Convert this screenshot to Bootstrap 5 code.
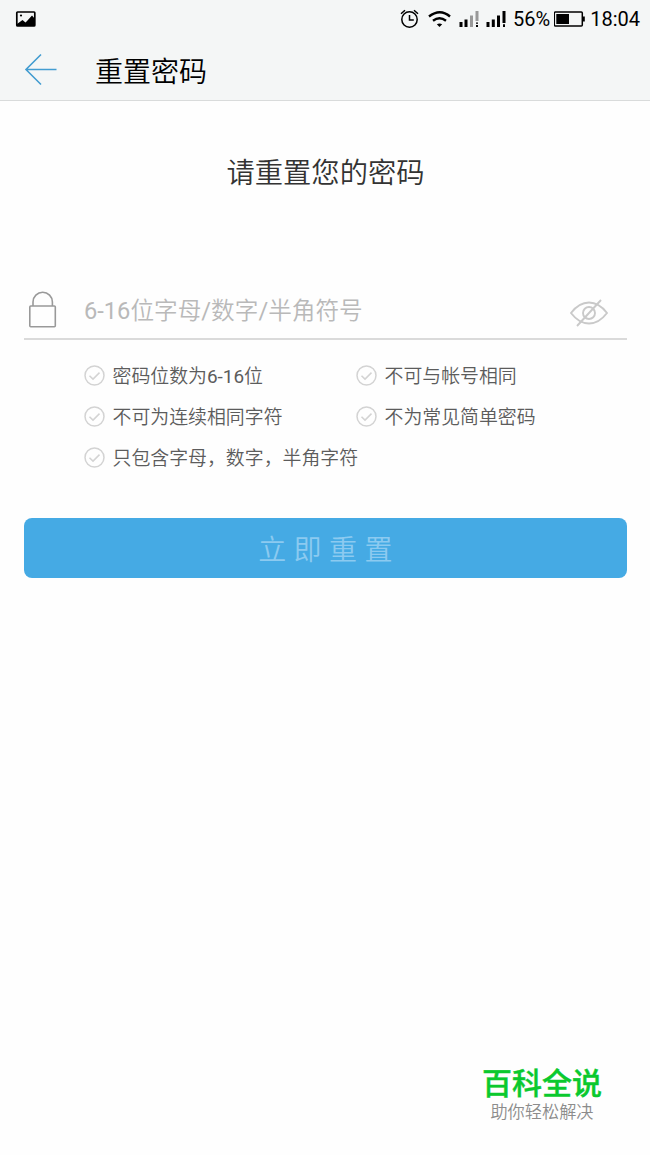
<!DOCTYPE html>
<html lang="zh-CN">
<head>
<meta charset="utf-8">
<meta name="viewport" content="width=device-width, initial-scale=1">
<title>重置密码</title>
<link href="https://cdn.jsdelivr.net/npm/bootstrap@5.3.0/dist/css/bootstrap.min.css" rel="stylesheet">
<style>
  body { font-family: Roboto, "Noto Sans CJK SC", sans-serif; color: #000; background: #fefefe; }
  svg { display: block; flex: none; }
  .screen { width: 650px; height: 1155px; }
  .top-area { height: 101px; background: #f4f6f6; border-bottom: 1px solid #d9dbdb; }
  .status-bar { height: 38px; padding: 0 10px 0 15px; font-size: 20px; line-height: 38px; }
  .app-bar { height: 62px; padding: 2px 0 0 24px; }
  .app-title { font-size: 28px; line-height: 40px; margin: 0 0 0 38px; padding-top: 5px; font-weight: 350; }
  .content { padding: 0 23px 0 24px; }
  .heading { font-size: 28.3px; line-height: 40px; margin: 53px 0 0; font-weight: 350; color: #333; }
  .field { height: 60px; margin-top: 86px; border-bottom: 2px solid #dadada; }
  .pwd { font-size: 23.65px; font-weight: 350; padding-top: 4px; margin-left: 26px; line-height: 36px; color: #b9b9b9; }
  .latin { font-weight: 400; }
  .eye { margin: 7px 19.500px 0 0; }
  .rules { padding: 15px 0 0 60px; font-size: 18.9px; font-weight: 350; line-height: 41px; color: #5c5c5c; }
  .rule { gap: 7.500px; height: 41px; white-space: nowrap; }
  .rule > span { padding-top: 1.500px; }
  .rule-first { width: 272px; }
  .reset { height: 60px; margin-top: 40px; border-radius: 8px; font-size: 28px; letter-spacing: 7.4px; padding: 5px 0 0 7px; font-weight: 350;
    --bs-btn-color: #8ccaf0; --bs-btn-bg: #45aae4; --bs-btn-hover-color: #8ccaf0; --bs-btn-hover-bg: #3d9fd8; }
  .brand { width: 120px; margin: 0 48px 31px 0; }
  .brand-name { font-size: 30px; line-height: 34px; padding-top: 3px; margin-bottom: -1px; font-weight: 500; color: #0ac92e; -webkit-text-stroke: .4px #0ac92e; }
  .brand-line { font-size: 17.2px; line-height: 24px; font-weight: 350; color: #8c8c8c; }
</style>
</head>
<body>
<div class="screen d-flex flex-column overflow-hidden">
  <header class="top-area">
    <div class="status-bar d-flex align-items-center">
      <svg width="21" height="18" viewBox="0 0 21 18"><rect x="1.800" y="2" width="18" height="14" rx=".8" fill="none" stroke="#000" stroke-width="1.700"/><path d="M2 15v-1l5.500-4 3 2.500 1.500-1.500 5-5.500 3 3.500V16H2z"/><circle cx="6" cy="5.500" r="1.100"/></svg>
      <div class="d-flex align-items-center ms-auto">
        <svg width="113" height="22" viewBox="0 0 113 22">
          <g fill="none" stroke="#000" stroke-width="1.500"><circle cx="9.500" cy="11.500" r="7.700"/><path d="M9.500 7v5h4.300M1 5.800l4-3.500M18 5.800l-4-3.500"/></g>
          <g fill="none" stroke="#000" stroke-width="2.400"><path d="M29 8.500q11-8.500 21 0M33 12.800q6.500-5 13 0"/></g><path d="M36.800 16.300q2.700-1.500 5.400 0l-2.700 2.800z"/>
          <path d="M59.500 14h3v5h-3zM64.500 11.500h3V19h-3z"/><path fill="#999" d="M70 7.500h3V19h-3zM75.500 3h3v10h-3z"/><path d="M76 14.500h2v1.300h-2zM76 17h2v2h-2z"/>
          <path d="M86.500 14h3v5h-3zM91.800 11.500h3V19h-3zM97 7.500h3V19h-3zM102.500 3h3v12h-3zM103 16.200h2V19h-2z"/>
        </svg>
        <span>56%</span>
        <svg class="ms-1" width="32" height="18" viewBox="0 0 32 18"><rect x=".3" y="2" width="28" height="14" rx="1" fill="none" stroke="#000" stroke-width="1.500"/><path d="M2.300 4H15v10H2.300zM28.500 6.500h2.300v5h-2.300z"/></svg>
        <span class="ms-1">18:04</span>
      </div>
    </div>
    <div class="app-bar d-flex align-items-center">
      <svg width="33" height="34" viewBox="0 0 33 34"><path d="M17 1.500 2 16.500l15 15M2 16.500h30.500" fill="none" stroke="#439dd1" stroke-width="1.600"/></svg>
      <h1 class="app-title">重置密码</h1>
    </div>
  </header>

  <main class="content">
    <h2 class="heading text-center">请重置您的密码</h2>
    <div class="field d-flex align-items-center">
      <svg class="ms-1" width="30" height="37" viewBox="0 0 30 37"><g fill="none" stroke="#999" stroke-width="1.600"><rect x="1.800" y="15" width="25.500" height="20.700" rx="1"/><path d="M5 15v-4a9.700 9.700 0 0 1 19.400 0v4"/></g></svg>
      <div class="pwd flex-grow-1 text-nowrap"><span class="latin">6-16</span>位字母<span class="latin">/</span>数字<span class="latin">/</span>半角符号</div>
      <svg class="eye" width="38" height="30" viewBox="0 0 38 30"><g fill="none" stroke="#c9c9c9" stroke-width="1.900"><path d="M1 15Q9 4.500 19 4.500T37 15Q29 25.500 19 25.500T1 15z"/><circle cx="19" cy="15" r="6"/><path d="M31 2 7 28"/></g></svg>
    </div>

    <svg class="d-none"><symbol id="tick" viewBox="0 0 21 21"><g fill="none" stroke="#d3d3d3" stroke-width="1.500"><circle cx="10.500" cy="10.500" r="9.500"/><path d="M5.500 10.800l3.500 3.300 6.500-6.500"/></g></symbol></svg>
    <div class="rules">
      <div class="d-flex">
        <div class="rule rule-first d-flex align-items-center"><svg width="21" height="21"><use href="#tick"/></svg><span>密码位数为<span class="latin">6-16</span>位</span></div>
        <div class="rule d-flex align-items-center"><svg width="21" height="21"><use href="#tick"/></svg><span>不可与帐号相同</span></div>
      </div>
      <div class="d-flex">
        <div class="rule rule-first d-flex align-items-center"><svg width="21" height="21"><use href="#tick"/></svg><span>不可为连续相同字符</span></div>
        <div class="rule d-flex align-items-center"><svg width="21" height="21"><use href="#tick"/></svg><span>不为常见简单密码</span></div>
      </div>
      <div class="rule d-flex align-items-center"><svg width="21" height="21"><use href="#tick"/></svg><span>只包含字母，数字，半角字符</span></div>
    </div>
    <button class="reset btn w-100 border-0" type="button">立即重置</button>
  </main>

  <footer class="brand mt-auto ms-auto text-center text-nowrap">
    <div class="brand-name">百科全说</div>
    <div class="brand-line">助你轻松解决</div>
  </footer>
</div>
<script src="https://cdn.jsdelivr.net/npm/bootstrap@5.3.0/dist/js/bootstrap.bundle.min.js"></script>
</body>
</html>
